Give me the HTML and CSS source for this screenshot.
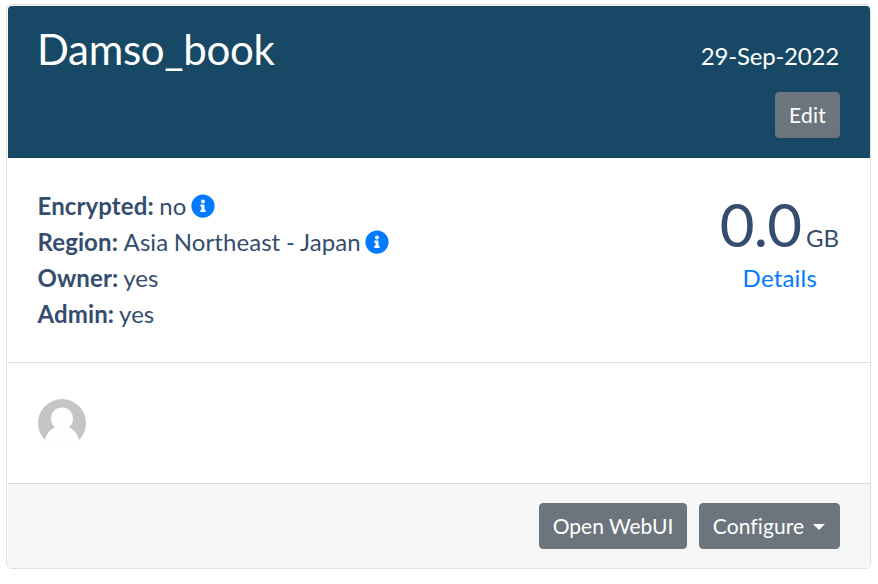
FILE: index.html
```html
<!DOCTYPE html>
<html lang="en">
<head>
<meta charset="utf-8">
<title>Damso_book</title>
<link rel="stylesheet" href="styles.css">
</head>
<body>
<article class="card">
  <header class="card-header">
    <h1>Damso_book</h1>
    <div class="header-side">
      <time>29-Sep-2022</time>
      <button class="btn btn-edit">Edit</button>
    </div>
  </header>
  <section class="details">
    <div class="facts">
      <div><b>Encrypted:</b> no <svg class="info" viewBox="0 0 512 512"><path fill="currentColor" d="M256 8C119 8 8 119 8 256s111 248 248 248 248-111 248-248S393 8 256 8zm0 110a42 42 0 1 1 0 84 42 42 0 0 1 0-84zm56 254c0 7-5 12-12 12h-88c-7 0-12-5-12-12v-24c0-7 5-12 12-12h12v-64h-12c-7 0-12-5-12-12v-24c0-7 5-12 12-12h64c7 0 12 5 12 12v100h12c7 0 12 5 12 12v24z"/></svg></div>
      <div><b>Region:</b> <span class="place">Asia Northeast - Japan</span> <svg class="info" viewBox="0 0 512 512"><path fill="currentColor" d="M256 8C119 8 8 119 8 256s111 248 248 248 248-111 248-248S393 8 256 8zm0 110a42 42 0 1 1 0 84 42 42 0 0 1 0-84zm56 254c0 7-5 12-12 12h-88c-7 0-12-5-12-12v-24c0-7 5-12 12-12h12v-64h-12c-7 0-12-5-12-12v-24c0-7 5-12 12-12h64c7 0 12 5 12 12v100h12c7 0 12 5 12 12v24z"/></svg></div>
      <div><b>Owner:</b> yes</div>
      <div><b>Admin:</b> yes</div>
    </div>
    <div class="usage">
      <div class="size"><span>0.0</span> GB</div>
      <a>Details</a>
    </div>
  </section>
  <section class="members">
    <svg class="avatar" viewBox="0 0 48 48"><path fill="#c5c5c5" d="M7.500 41.500A24 24 0 1 1 40.500 41.500L24 32z"/><path fill="#fefefe" d="M24 8.500c6.500 0 11 4.500 11 11 0 4-1.500 7-4 9 5 2 8.700 6.500 10 12.500V48H7v-7c1.300-6 5-10.500 10-12.500-2.500-2-4-5-4-9 0-6.500 4.500-11 11-11z"/></svg>
  </section>
  <footer class="card-footer">
    <button class="btn btn-open">Open WebUI</button>
    <button class="btn btn-configure">Configure<i class="caret"></i></button>
  </footer>
</article>
</body>
</html>
```
FILE: styles.css
```css
* { box-sizing: border-box; }
body { margin: 0; padding: 4px 6px; font: 24px/36px Lato, sans-serif; color: #344d6e; background: #fff; }
.card { width: 865px; height: 565px; padding: 1px 0 1px 1px; border: 1px solid #dfdfdf; border-radius: 6px; display: flex; flex-direction: column; }
.card-header { height: 152px; flex: none; padding: 18px 30px; display: flex; justify-content: space-between; background: #174865; border-bottom: 1px solid #123f59; border-radius: 4px 4px 0 0; color: #fff; }
h1 { margin: 0 0 0 -1px; font-size: 42px; line-height: 50px; font-weight: 400; letter-spacing: -0.3px; }
.header-side { display: flex; flex-direction: column; align-items: flex-end; padding-top: 14px; }
.header-side time { margin-right: 1px; letter-spacing: -0.2px; }
.header-side .btn { margin-top: 18px; }
.btn { height: 46px; padding: 0; border: 1px solid #6c757d; border-radius: 4px; background: #6c757d; color: #fff; font: 21px/32px Lato, sans-serif; text-align: center; white-space: nowrap; }
.btn-edit { width: 65px; letter-spacing: 0.2px; }
.btn-open { width: 148px; }
.btn-configure { width: 141px; padding-right: 1px; letter-spacing: 0.1px; }
.details { height: 205px; flex: none; padding: 30px; display: flex; justify-content: space-between; border-bottom: 1px solid #dfdfdf; }
.facts { margin-left: -0.5px; word-spacing: -0.5px; }
.facts b { letter-spacing: 0.1px; }
.place { letter-spacing: 0.06px; }
.info { width: 24px; height: 24px; margin-left: -1px; color: #007bff; vertical-align: -3px; }
.usage { text-align: center; }
.size { height: 72px; margin-right: 1px; line-height: 72px; word-spacing: -1.5px; }
.size span { font-size: 60px; letter-spacing: -0.7px; }
.usage a { display: block; color: #007bff; letter-spacing: 0.2px; }
.members { height: 120px; flex: none; padding: 36px 30px; }
.avatar { display: block; width: 48px; height: 48px; }
.card-footer { flex: 1; padding: 19px 30px; border-top: 1px solid #d8d8d8; border-radius: 0 0 4px 4px; background: #f7f7f7; display: flex; justify-content: flex-end; gap: 12px; }
.caret { display: inline-block; margin-left: 9px; vertical-align: 4px; border: 6.3px solid transparent; border-top-color: #fff; border-bottom: 0; }
```
